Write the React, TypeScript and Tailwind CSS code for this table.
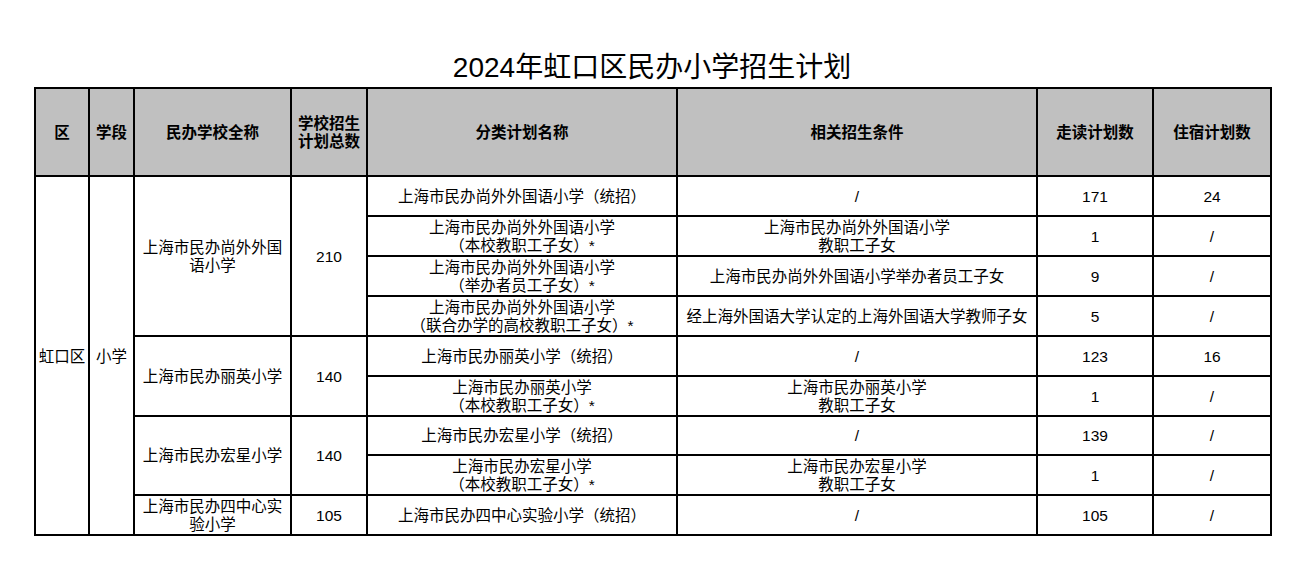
import React from 'react';

type Row = {
  plan: string[];
  cond: string[];
  walk: string;
  board: string;
};

type School = {
  name: string[];
  total: string;
  rows: Row[];
};

const schools: School[] = [
  {
    name: ['上海市民办尚外外国', '语小学'],
    total: '210',
    rows: [
      { plan: ['上海市民办尚外外国语小学（统招）'], cond: ['/'], walk: '171', board: '24' },
      {
        plan: ['上海市民办尚外外国语小学', '（本校教职工子女）*'],
        cond: ['上海市民办尚外外国语小学', '教职工子女'],
        walk: '1',
        board: '/',
      },
      {
        plan: ['上海市民办尚外外国语小学', '（举办者员工子女）*'],
        cond: ['上海市民办尚外外国语小学举办者员工子女'],
        walk: '9',
        board: '/',
      },
      {
        plan: ['上海市民办尚外外国语小学', '（联合办学的高校教职工子女）*'],
        cond: ['经上海外国语大学认定的上海外国语大学教师子女'],
        walk: '5',
        board: '/',
      },
    ],
  },
  {
    name: ['上海市民办丽英小学'],
    total: '140',
    rows: [
      { plan: ['上海市民办丽英小学（统招）'], cond: ['/'], walk: '123', board: '16' },
      {
        plan: ['上海市民办丽英小学', '（本校教职工子女）*'],
        cond: ['上海市民办丽英小学', '教职工子女'],
        walk: '1',
        board: '/',
      },
    ],
  },
  {
    name: ['上海市民办宏星小学'],
    total: '140',
    rows: [
      { plan: ['上海市民办宏星小学（统招）'], cond: ['/'], walk: '139', board: '/' },
      {
        plan: ['上海市民办宏星小学', '（本校教职工子女）*'],
        cond: ['上海市民办宏星小学', '教职工子女'],
        walk: '1',
        board: '/',
      },
    ],
  },
  {
    name: ['上海市民办四中心实', '验小学'],
    total: '105',
    rows: [{ plan: ['上海市民办四中心实验小学（统招）'], cond: ['/'], walk: '105', board: '/' }],
  },
];

const totalRows = schools.reduce((n, s) => n + s.rows.length, 0);

function Lines({ items }: { items: string[] }) {
  return (
    <>
      {items.map((t, i) => (
        <div key={i} className="whitespace-nowrap">
          {t}
        </div>
      ))}
    </>
  );
}

const th = 'border-2 border-black bg-[#c0c0c0] font-bold text-center align-middle leading-[18px] p-0 pt-[1px]';
const td = 'border-2 border-black text-center align-middle leading-[18px] p-0 pt-[2px]';

export default function App() {
  return (
    <div
      className="min-h-screen bg-white text-black pl-[34px] pt-[51px]"
      style={{ fontFamily: '"Liberation Sans", "Noto Sans CJK SC", sans-serif' }}
    >
      <div className="w-[1236px] text-center text-[28px] leading-[34px] mb-[2px]">2024年虹口区民办小学招生计划</div>
      <table className="w-[1236px] table-fixed border-collapse border-2 border-black text-[15.5px]">
        <colgroup>
          <col className="w-[54px]" />
          <col className="w-[45px]" />
          <col className="w-[157px]" />
          <col className="w-[76px]" />
          <col className="w-[310px]" />
          <col className="w-[360px]" />
          <col className="w-[116px]" />
          <col className="w-[118px]" />
        </colgroup>
        <thead>
          <tr className="h-[88px]">
            <th className={th}>区</th>
            <th className={th}>学段</th>
            <th className={th}>民办学校全称</th>
            <th className={th}>
              <Lines items={['学校招生', '计划总数']} />
            </th>
            <th className={th}>分类计划名称</th>
            <th className={th}>相关招生条件</th>
            <th className={th}>走读计划数</th>
            <th className={th}>住宿计划数</th>
          </tr>
        </thead>
        <tbody>
          {schools.map((s, si) =>
            s.rows.map((r, ri) => (
              <tr key={si + '-' + ri} className="h-[39.8px]">
                {si === 0 && ri === 0 && (
                  <>
                    <td rowSpan={totalRows} className={td}>
                      虹口区
                    </td>
                    <td rowSpan={totalRows} className={td}>
                      小学
                    </td>
                  </>
                )}
                {ri === 0 && (
                  <>
                    <td rowSpan={s.rows.length} className={td}>
                      <Lines items={s.name} />
                    </td>
                    <td rowSpan={s.rows.length} className={td}>
                      {s.total}
                    </td>
                  </>
                )}
                <td className={td}>
                  <Lines items={r.plan} />
                </td>
                <td className={td}>
                  <Lines items={r.cond} />
                </td>
                <td className={td}>{r.walk}</td>
                <td className={td}>{r.board}</td>
              </tr>
            ))
          )}
        </tbody>
      </table>
    </div>
  );
}
